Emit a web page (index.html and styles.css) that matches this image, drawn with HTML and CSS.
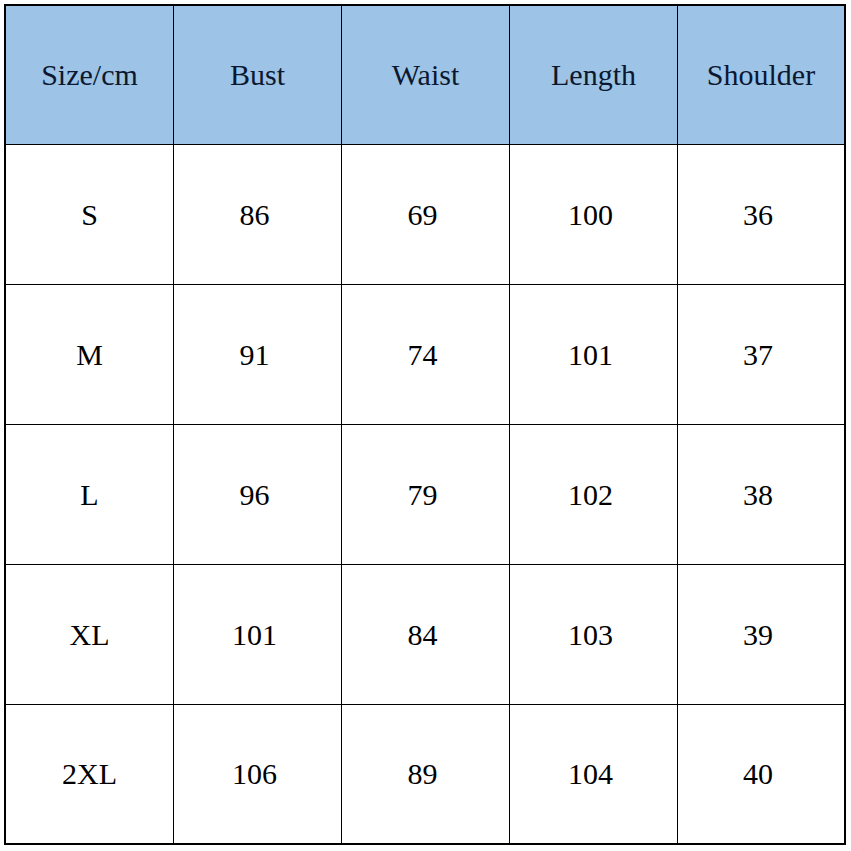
FILE: index.html
```html
<!DOCTYPE html>
<html>
<head>
<meta charset="utf-8">
<link rel="stylesheet" href="styles.css">
</head>
<body>
<div class="sheet">
  <div class="grid">
    <div class="cell head">Size/cm</div>
    <div class="cell head">Bust</div>
    <div class="cell head">Waist</div>
    <div class="cell head">Length</div>
    <div class="cell head">Shoulder</div>

    <div class="cell first">S</div><div class="cell">86</div><div class="cell">69</div><div class="cell">100</div><div class="cell">36</div>
    <div class="cell first">M</div><div class="cell">91</div><div class="cell">74</div><div class="cell">101</div><div class="cell">37</div>
    <div class="cell first">L</div><div class="cell">96</div><div class="cell">79</div><div class="cell">102</div><div class="cell">38</div>
    <div class="cell first">XL</div><div class="cell">101</div><div class="cell">84</div><div class="cell">103</div><div class="cell">39</div>
    <div class="cell first">2XL</div><div class="cell">106</div><div class="cell">89</div><div class="cell">104</div><div class="cell">40</div>
  </div>
</div>
</body>
</html>
```
FILE: styles.css
```css
html, body {
  margin: 0;
  padding: 0;
  background: #ffffff;
}
.sheet {
  padding: 4px 0 0 4px;
}
.grid {
  display: grid;
  grid-template-columns: 167px 167px 167px 167px 166px;
  grid-template-rows: 138px 139px 139px 139px 139px 138px;
  gap: 1px;
  width: 838px;
  background: #000000;
  border: 2px solid #000000;
}
.cell {
  display: flex;
  align-items: center;
  justify-content: center;
  padding-right: 6px;
  background: #ffffff;
  font-family: "Liberation Serif", "Times New Roman", serif;
  font-size: 30px;
  color: #000000;
}
.cell.first {
  padding-right: 0;
}
.cell.head {
  padding-right: 0;
  background: #9dc3e6;
  color: #0b1830;
  font-size: 30px;
}
```
